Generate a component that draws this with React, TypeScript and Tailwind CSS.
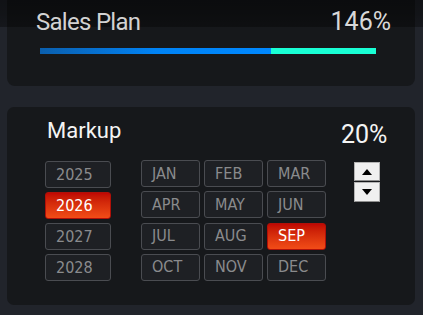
const YEARS = ['2025', '2026', '2027', '2028']
const MONTHS = ['JAN', 'FEB', 'MAR', 'APR', 'MAY', 'JUN', 'JUL', 'AUG', 'SEP', 'OCT', 'NOV', 'DEC']

function PickButton({ label, active, wide }: { label: string; active: boolean; wide?: boolean }) {
  return (
    <div
      className={`flex h-[27px] items-center rounded-[3px] border pl-[10px] font-['DejaVu_Sans_Condensed','Roboto',sans-serif] text-[16px] ${wide ? 'w-[66px]' : 'w-[59px]'} ${
        active
          ? 'border-[#b01008] bg-gradient-to-b from-[#c00603] to-[#f24c17] text-white'
          : 'border-[#4a4c51] bg-[#1e2024] text-[#8a8b8d]'
      }`}
    >
      {label}
    </div>
  )
}

function Spinner() {
  return (
    <div className="flex flex-col">
      <button className="flex h-[19px] w-[26px] items-center justify-center border border-[#b4b4b4] border-b-[#8e8e8e] bg-[#f0f0f0]">
        <svg width="10" height="6" viewBox="0 0 10 6"><path d="M5 0 L10 6 L0 6 Z" fill="#000" /></svg>
      </button>
      <button className="mt-[1px] flex h-[20px] w-[26px] items-center justify-center border border-[#b4b4b4] border-b-[#8e8e8e] bg-[#f0f0f0]">
        <svg width="10" height="6" viewBox="0 0 10 6"><path d="M0 0 L10 0 L5 6 Z" fill="#000" /></svg>
      </button>
    </div>
  )
}

export default function App() {
  const year = '2026'
  const month = 'SEP'
  const pct = 146

  return (
    <div className="relative h-[315px] w-[423px] overflow-hidden bg-[#21242b] font-['Roboto',sans-serif]">
      {/* top shade from the header above */}
      <div className="absolute inset-x-0 top-0 h-[27px] bg-gradient-to-b from-black/50 via-black/45 to-black/35" />

      {/* Sales plan card */}
      <div className="ml-[7px] mr-[8px] h-[86px] rounded-b-[8px] bg-[#16181b]">
        <div className="relative z-10 flex items-start justify-between pl-[29px] pr-[24px] pt-[8px]">
          <span className="text-[24px] leading-[28px] tracking-[-0.03em] text-[#d2d2d2]">Sales Plan</span>
          <span className="text-[25px] leading-[28px] text-[#d8d8d8]">{pct}%</span>
        </div>
        <div className="ml-[33px] mt-[12px] flex h-[6px] w-[336px]">
          <div className="h-full w-[231px] bg-gradient-to-r from-[#0a5fae] via-[#0083f5] to-[#0088ff]" />
          <div className="h-full flex-1 bg-[#19ffd5]" />
        </div>
      </div>

      {/* Markup card */}
      <div className="ml-[7px] mr-[8px] mt-[21px] flex h-[198px] rounded-[7px] bg-[#16181b] pl-[38px]">
        <div className="flex flex-col pt-[10px]">
          <span className="ml-[2px] text-[22px] leading-[28px] text-[#f4f4f4]">Markup</span>
          <div className="mt-[15px] flex">
            <div className="mt-[1px] flex flex-col gap-[4px]">
              {YEARS.map(y => <PickButton key={y} label={y} active={y === year} wide />)}
            </div>
            <div className="ml-[30px] grid grid-cols-3 gap-[4px]">
              {MONTHS.map(m => <PickButton key={m} label={m} active={m === month} />)}
            </div>
          </div>
        </div>
        <div className="ml-[15px] flex flex-col pt-[14px]">
          <span className="text-[25px] leading-[28px] text-[#f4f4f4]">20%</span>
          <div className="ml-[13px] mt-[13px]">
            <Spinner />
          </div>
        </div>
      </div>
    </div>
  )
}
